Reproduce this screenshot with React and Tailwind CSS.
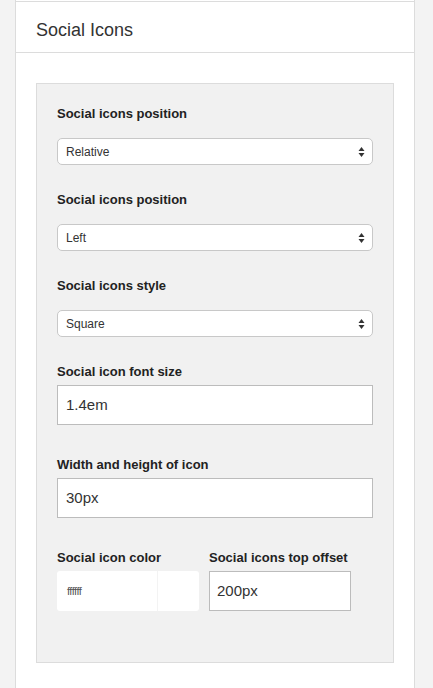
import React from 'react';

const font = { fontFamily: '"Liberation Sans", Arial, sans-serif' };

const Arrows = () => (
    <svg width="7" height="11" viewBox="0 0 7 11" className="absolute right-[7px] top-1/2 -translate-y-1/2">
        <path d="M3.5 0.5 L6.5 4.5 L0.5 4.5 Z" fill="#333" />
        <path d="M3.5 10.5 L6.5 6.5 L0.5 6.5 Z" fill="#333" />
    </svg>
);

const SelectField = ({ label, value }) => (
    <div>
        <div className="text-[13px] font-bold text-[#222] leading-4">{label}</div>
        <div className="relative mt-[16px] h-[27px] bg-white border border-[#c8c8c8] rounded-[5px] flex items-center pl-[8px] text-[12px] text-[#333]">
            {value}
            <Arrows />
        </div>
    </div>
);

const TextField = ({ label, value }) => (
    <div>
        <div className="text-[13px] font-bold text-[#222] leading-4">{label}</div>
        <div className="mt-[5px] h-[40px] bg-white border border-[#bcbcbc] flex items-center pl-[8px] text-[15px] text-[#333]">
            {value}
        </div>
    </div>
);

export default function App() {
    const fields = [
        { label: 'Social icons position', value: 'Relative' },
        { label: 'Social icons position', value: 'Left' },
        { label: 'Social icons style', value: 'Square' },
    ];

    return (
        <div className="min-h-[688px] bg-[#f3f3f3] pl-[15px] pr-[18px]" style={font}>
            <div className="bg-white border-x border-[#dcdcdc] min-h-[688px]">
                <div className="h-px" />
                <div className="border-t border-b border-[#dcdcdc] h-[52px] flex items-center pl-[20px] pt-[6px] text-[18px] text-[#333]">
                    Social Icons
                </div>
                <div className="px-[20px] pt-[30px] pb-[26px]">
                    <div className="bg-[#f1f1f1] border border-[#dcdcdc] px-[20px] pt-[22px] pb-[51px]">
                        <div className="flex flex-col gap-[27px]">
                            {fields.map((f, i) => (
                                <SelectField key={i} label={f.label} value={f.value} />
                            ))}
                        </div>
                        <div className="mt-[27px] flex flex-col gap-[32px]">
                            <TextField label="Social icon font size" value="1.4em" />
                            <TextField label="Width and height of icon" value="30px" />
                        </div>
                        <div className="mt-[32px] flex gap-[10px]">
                            <div className="w-[142px]">
                                <div className="text-[13px] font-bold text-[#222] leading-4">Social icon color</div>
                                <div className="mt-[5px] h-[40px] bg-white rounded-[3px] flex">
                                    <div className="w-[101px] border-r border-[#f3f3f3] flex items-center pl-[10px] text-[11px] text-[#555] tracking-[-0.5px]">
                                        ffffff
                                    </div>
                                    <div className="flex-1" />
                                </div>
                            </div>
                            <div className="w-[142px]">
                                <div className="text-[13px] font-bold text-[#222] leading-4">Social icons top offset</div>
                                <div className="mt-[5px] h-[40px] bg-white border border-[#bcbcbc] flex items-center pl-[7px] text-[15px] text-[#333]">
                                    200px
                                </div>
                            </div>
                        </div>
                    </div>
                </div>
            </div>
        </div>
    );
}
